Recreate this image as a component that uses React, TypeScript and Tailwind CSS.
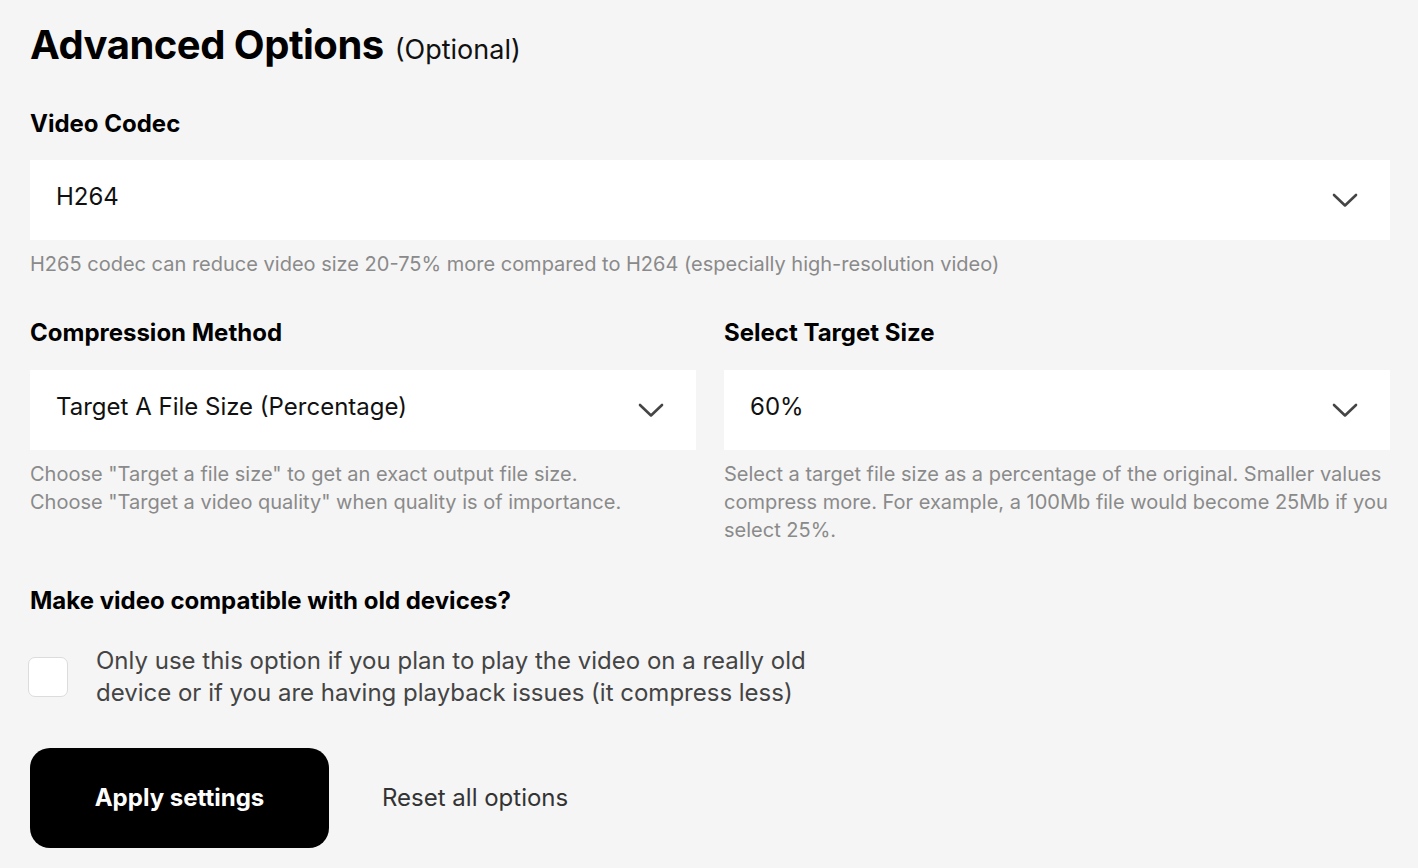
import { useState } from 'react';

const Chevron = () => (
  <svg width="26" height="15" viewBox="0 0 26 15" fill="none" className="shrink-0 text-[#454545]">
    <polyline points="2,2 13,12.5 24,2" stroke="currentColor" strokeWidth="2.6" strokeLinecap="round" strokeLinejoin="round" />
  </svg>
);

function SelectBox({ value }: { value: string }) {
  return (
    <div className="flex h-[80px] items-center justify-between bg-white pl-[26px] pr-[32px]">
      <span className="text-[24px] leading-[32px] text-[#111] -mt-[6px]">{value}</span>
      <Chevron />
    </div>
  );
}

export default function App() {
  const [oldDevices, setOldDevices] = useState(false);

  return (
    <div className="min-h-[868px] bg-[#f5f5f5] px-[30px] pt-[21px]" style={{ fontFamily: 'Inter, "Liberation Sans", sans-serif' }}>
      <div className="w-[1360px]">
        <h1 className="flex items-baseline gap-[11px] leading-[48px]">
          <span className="text-[40px] font-bold tracking-[-0.5px] text-black">Advanced Options</span>
          <span className="text-[27px] font-normal text-[#111]">(Optional)</span>
        </h1>

        {/* Video codec */}
        <div className="mt-[34px]">
          <h2 className="text-[24px] font-bold leading-[32px] text-black">Video Codec</h2>
          <div className="mt-[20px]">
            <SelectBox value="H264" />
          </div>
          <p className="mt-[10px] text-[20px] leading-[28px] text-[#8a8a8a]">
            H265 codec can reduce video size 20-75% more compared to H264 (especially high-resolution video)
          </p>
        </div>

        {/* Compression + target size */}
        <div className="mt-[39px] grid grid-cols-2 gap-x-[28px]">
          <div>
            <h2 className="text-[24px] font-bold leading-[32px] text-black">Compression Method</h2>
            <div className="mt-[21px]">
              <SelectBox value="Target A File Size (Percentage)" />
            </div>
            <p className="mt-[10px] text-[20px] leading-[28px] text-[#8a8a8a]">
              Choose "Target a file size" to get an exact output file size.
              <br />
              Choose "Target a video quality" when quality is of importance.
            </p>
          </div>
          <div>
            <h2 className="text-[24px] font-bold leading-[32px] text-black">Select Target Size</h2>
            <div className="mt-[21px]">
              <SelectBox value="60%" />
            </div>
            <p className="mt-[10px] text-[20px] leading-[28px] text-[#8a8a8a]">
              Select a target file size as a percentage of the original. Smaller values compress more. For example, a 100Mb file would become 25Mb if you select 25%.
            </p>
          </div>
        </div>

        {/* Old devices */}
        <div className="mt-[41px]">
          <h2 className="text-[24px] font-bold leading-[32px] text-black">Make video compatible with old devices?</h2>
          <label className="mt-[28px] flex cursor-pointer items-center gap-[28px]">
            <button
              type="button"
              onClick={() => setOldDevices(!oldDevices)}
              className="-ml-[2px] h-[40px] w-[40px] shrink-0 rounded-[7px] border border-[#dcdcdc] bg-white"
            />
            <span className="w-[740px] text-[24px] leading-[32px] text-[#444]">
              Only use this option if you plan to play the video on a really old device or if you are having playback issues (it compress less)
            </span>
          </label>
        </div>

        {/* Actions */}
        <div className="mt-[39px] flex items-center gap-[53px]">
          <button className="h-[100px] w-[299px] rounded-[20px] bg-black text-[24px] font-bold text-white">
            Apply settings
          </button>
          <button className="text-[24px] text-[#333]">Reset all options</button>
        </div>
      </div>
    </div>
  );
}
